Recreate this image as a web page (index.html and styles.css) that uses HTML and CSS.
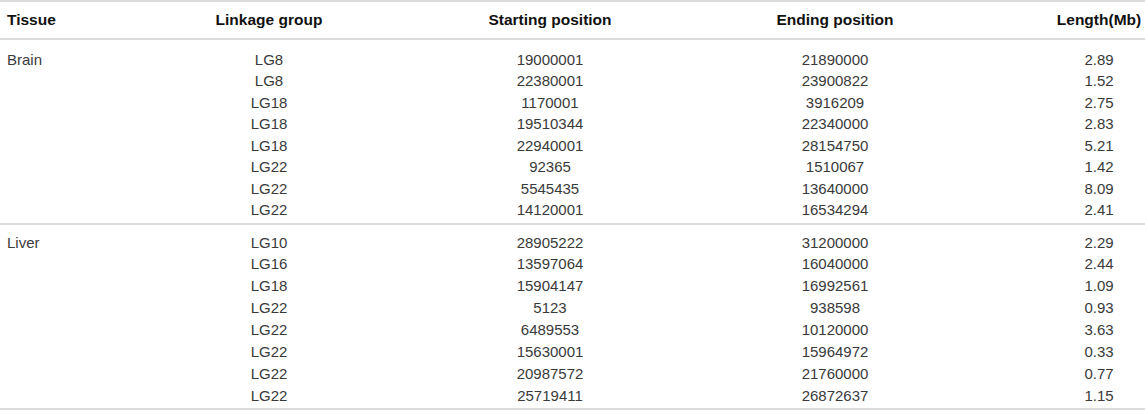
FILE: index.html
```html
<!DOCTYPE html>
<html>
<head>
<meta charset="utf-8">
<link rel="stylesheet" href="styles.css">
</head>
<body>
<table class="data">
  <colgroup>
    <col class="c1"><col class="c2"><col class="c3"><col class="c4"><col class="c5">
  </colgroup>
  <thead>
    <tr><th class="tissue">Tissue</th><th>Linkage group</th><th>Starting position</th><th>Ending position</th><th>Length(Mb)</th></tr>
  </thead>
  <tbody class="sec sec1">
    <tr><td class="tissue">Brain</td><td>LG8</td><td>19000001</td><td>21890000</td><td>2.89</td></tr>
    <tr><td class="tissue"></td><td>LG8</td><td>22380001</td><td>23900822</td><td>1.52</td></tr>
    <tr><td class="tissue"></td><td>LG18</td><td>1170001</td><td>3916209</td><td>2.75</td></tr>
    <tr><td class="tissue"></td><td>LG18</td><td>19510344</td><td>22340000</td><td>2.83</td></tr>
    <tr><td class="tissue"></td><td>LG18</td><td>22940001</td><td>28154750</td><td>5.21</td></tr>
    <tr><td class="tissue"></td><td>LG22</td><td>92365</td><td>1510067</td><td>1.42</td></tr>
    <tr><td class="tissue"></td><td>LG22</td><td>5545435</td><td>13640000</td><td>8.09</td></tr>
    <tr><td class="tissue"></td><td>LG22</td><td>14120001</td><td>16534294</td><td>2.41</td></tr>
  </tbody>
  <tbody class="sec sec2">
    <tr><td class="tissue">Liver</td><td>LG10</td><td>28905222</td><td>31200000</td><td>2.29</td></tr>
    <tr><td class="tissue"></td><td>LG16</td><td>13597064</td><td>16040000</td><td>2.44</td></tr>
    <tr><td class="tissue"></td><td>LG18</td><td>15904147</td><td>16992561</td><td>1.09</td></tr>
    <tr><td class="tissue"></td><td>LG22</td><td>5123</td><td>938598</td><td>0.93</td></tr>
    <tr><td class="tissue"></td><td>LG22</td><td>6489553</td><td>10120000</td><td>3.63</td></tr>
    <tr><td class="tissue"></td><td>LG22</td><td>15630001</td><td>15964972</td><td>0.33</td></tr>
    <tr><td class="tissue"></td><td>LG22</td><td>20987572</td><td>21760000</td><td>0.77</td></tr>
    <tr><td class="tissue"></td><td>LG22</td><td>25719411</td><td>26872637</td><td>1.15</td></tr>
  </tbody>
</table>
</body>
</html>
```
FILE: styles.css
```css
html, body {
  margin: 0;
  padding: 0;
  background: #ffffff;
}
body {
  font-family: "Liberation Sans", Arial, sans-serif;
}
.data {
  width: 1145px;
  table-layout: fixed;
  border-collapse: collapse;
  border-top: 2px solid #dcdcdc;
}
.c1 { width: 55px; }
.c2 { width: 428px; }
.c3 { width: 134px; }
.c4 { width: 436px; }
.c5 { width: 92px; }

.data th, .data td {
  padding: 0;
  text-align: center;
  white-space: nowrap;
}
.data th {
  height: 36px;
  font-size: 15.5px;
  font-weight: bold;
  color: #111111;
  vertical-align: middle;
  border-bottom: 2px solid #dcdcdc;
}
.data td {
  font-size: 15px;
  color: #3a3a3a;
}
.sec1 td { line-height: 21.43px; }
.sec2 td { line-height: 21.9px; }
.data .tissue {
  text-align: left;
  padding-left: 7px;
}
.sec {
  border-bottom: 2px solid #dcdcdc;
}
.sec1 tr:first-child td { padding-top: 9px; }
.sec2 tr:first-child td { padding-top: 7px; }
.sec1 tr:last-child td { padding-bottom: 2px; }
.sec2 tr:last-child td { padding-bottom: 1px; }
```
